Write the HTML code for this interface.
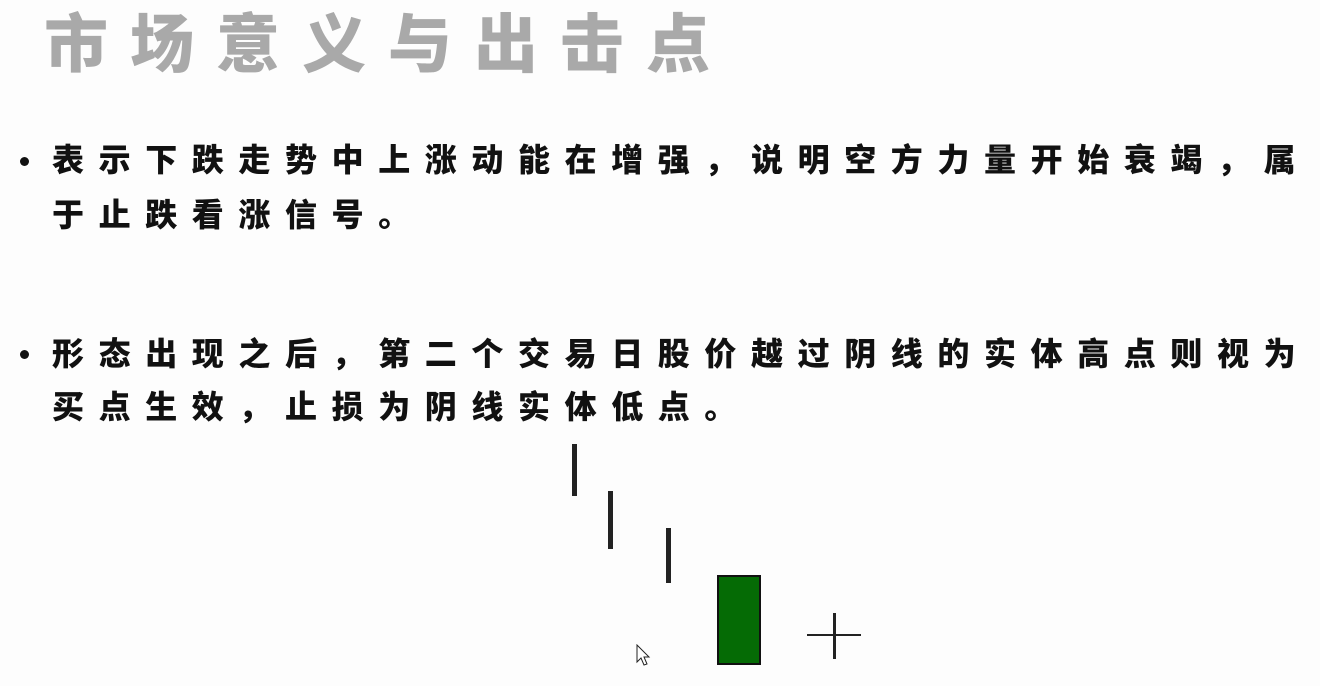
<!DOCTYPE html>
<html><head><meta charset="utf-8"><style>
body{margin:0;width:1320px;height:686px;background:#fdfdfd;overflow:hidden;position:relative;font-family:"Liberation Sans","Noto Sans CJK SC",sans-serif}
.t{position:absolute;left:44px;top:6px;font-size:64px;letter-spacing:22px;color:#a9a9a9;font-weight:900;white-space:nowrap;line-height:78px}
.l{position:absolute;left:52px;font-size:32px;letter-spacing:14.6px;font-weight:900;color:#111;white-space:nowrap;line-height:40px}
.b{position:absolute;left:20px;width:9px;height:9px;border-radius:50%;background:#111}
.k{position:absolute;background:#222}
</style></head><body>
<div class="t">市场意义与出击点</div>
<div class="b" style="top:157px"></div>
<div class="l" style="top:140px">表示下跌走势中上涨动能在增强，说明空方力量开始衰竭，属</div>
<div class="l" style="top:195px">于止跌看涨信号。</div>
<div class="b" style="top:350px"></div>
<div class="l" style="top:334px">形态出现之后，第二个交易日股价越过阴线的实体高点则视为</div>
<div class="l" style="top:387px">买点生效，止损为阴线实体低点。</div>
<div class="k" style="left:572px;top:444px;width:5px;height:52px"></div>
<div class="k" style="left:608px;top:491px;width:5px;height:58px"></div>
<div class="k" style="left:666px;top:528px;width:5px;height:55px"></div>
<div style="position:absolute;left:717px;top:575px;width:40px;height:86px;background:#056b05;border:2px solid #111"></div>
<div class="k" style="left:833px;top:613px;width:3px;height:46px"></div>
<div class="k" style="left:807px;top:634px;width:54px;height:2px"></div>
<svg style="position:absolute;left:636px;top:644px" width="18" height="24" viewBox="0 0 18 24"><path d="M1 1 L1 18 L5 14 L8 21 L11 20 L8 13 L13 13 Z" fill="#fff" stroke="#222" stroke-width="1"/></svg>
</body></html>
